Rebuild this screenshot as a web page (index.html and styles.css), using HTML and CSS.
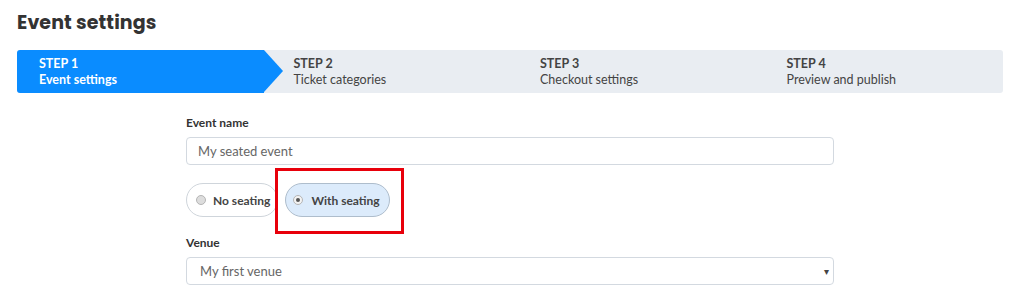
FILE: index.html
```html
<!DOCTYPE html>
<html>
<head>
<meta charset="utf-8">
<link rel="stylesheet" href="styles.css">
</head>
<body>
<h1 class="title">Event settings</h1>
<div class="steps">
  <div class="step step-active"><span class="step-num">STEP 1</span><span class="step-name">Event settings</span></div>
  <div class="step step-2"><span class="step-num">STEP 2</span><span class="step-name">Ticket categories</span></div>
  <div class="step"><span class="step-num">STEP 3</span><span class="step-name">Checkout settings</span></div>
  <div class="step"><span class="step-num">STEP 4</span><span class="step-name">Preview and publish</span></div>
</div>
<form class="form">
  <label class="label">Event name</label>
  <div class="input">My seated event</div>
  <div class="radios">
    <div class="pill"><span class="radio"></span>No seating</div>
    <div class="highlight">
      <div class="pill pill-on"><span class="radio radio-on"></span>With seating</div>
    </div>
  </div>
  <label class="label label-venue">Venue</label>
  <div class="input select">My first venue<span class="caret">▾</span></div>
</form>
</body>
</html>
```
FILE: styles.css
```css
* { box-sizing: border-box; }
body {
  margin: 0;
  padding: 0 21px 0 17px;
  font-family: "Lato", "Open Sans", sans-serif;
  background: #fff;
  color: #333;
}
.title {
  margin: 0;
  padding-top: 9px;
  height: 50px;
  font-family: "Poppins", "Inter", sans-serif;
  font-weight: 700;
  font-size: 19px;
  line-height: 28px;
  color: #333;
  letter-spacing: 0.1px;
}
.steps {
  display: grid;
  grid-template-columns: repeat(4, 1fr);
  height: 43px;
  background: #e9edf2;
  border-radius: 3px;
}
.step {
  display: flex;
  flex-direction: column;
  justify-content: center;
  padding-left: 30px;
  padding-top: 1px;
  font-size: 12.5px;
  line-height: 16px;
  color: #444;
}
.step-num { font-weight: 700; }
.step-active {
  position: relative;
  padding-left: 22px;
  color: #fff;
  background: #0a8cff;
  border-radius: 3px 0 0 3px;
}
.step-active::after {
  content: "";
  position: absolute;
  right: -19px;
  top: 0;
  width: 0;
  height: 0;
  border-top: 21.5px solid transparent;
  border-bottom: 21.5px solid transparent;
  border-left: 19px solid #0a8cff;
}
.step-active .step-name { font-weight: 700; }
.form {
  width: 648px;
  margin: 22px 0 0 169px;
  display: flex;
  flex-direction: column;
}
.label {
  font-size: 12px;
  font-weight: 700;
  line-height: 16px;
  color: #333;
}
.input {
  margin-top: 6px;
  height: 28px;
  border: 1px solid #d3d9e0;
  border-radius: 4px;
  padding: 0 11px;
  font-size: 13px;
  line-height: 26px;
  color: #666;
  position: relative;
}
.radios {
  display: flex;
  align-items: flex-start;
  margin-top: 3px;
}
.pill {
  display: flex;
  align-items: center;
  gap: 7px;
  height: 34px;
  padding: 0 7px 0 9px;
  border: 1px solid #cfd5db;
  border-radius: 17px;
  font-size: 12px;
  font-weight: 700;
  color: #444;
  background: #fff;
  margin-top: 15px;
}
.pill-on {
  margin-top: 0;
  background: #dcebfb;
  border-color: #aebdcc;
  padding: 0 9px 0 7px;
  gap: 8px;
}
.highlight {
  margin-left: -3px;
  padding: 12px 11px 14px 7px;
  border: 3px solid #e8000b;
}
.radio {
  width: 10px;
  height: 10px;
  border-radius: 50%;
  border: 1px solid #b5b5b5;
  background: #ddd;
}
.radio-on {
  background: #f3f3f3;
  display: flex;
  align-items: center;
  justify-content: center;
}
.radio-on::before {
  content: "";
  width: 4px;
  height: 4px;
  border-radius: 50%;
  background: #555;
}
.label-venue { margin-top: 1px; }
.select { margin-top: 6px; padding-left: 13px; }
.caret {
  position: absolute;
  right: 4px;
  top: 0;
  font-size: 10px;
  color: #444;
}
```
